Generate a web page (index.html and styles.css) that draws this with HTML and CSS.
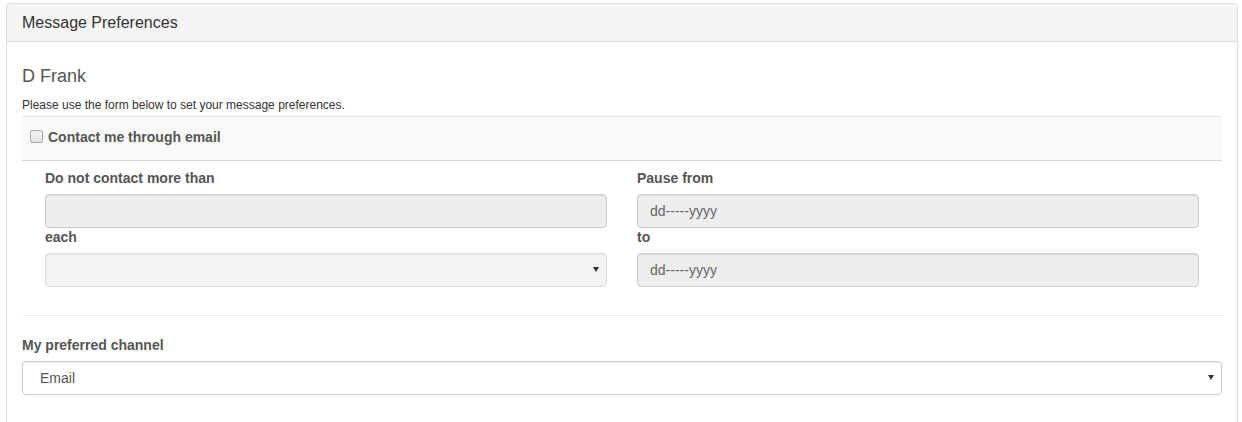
FILE: index.html
```html
<!DOCTYPE html>
<html>
<head>
<meta charset="utf-8">
<link rel="stylesheet" href="styles.css">
</head>
<body>
<div class="page">
  <div class="panel">
    <div class="panel-heading">Message Preferences</div>
    <div class="panel-body">
      <h4 class="name">D Frank</h4>
      <p class="intro">Please use the form below to set your message preferences.</p>
      <div class="contact-bar">
        <label class="check-label"><input type="checkbox" class="check"> Contact me through email</label>
      </div>
      <div class="grid">
        <div class="col">
          <label class="lbl">Do not contact more than</label>
          <input class="ctl" type="text" disabled>
          <label class="lbl">each</label>
          <div class="select-wrap">
            <select class="ctl sel" disabled><option></option></select>
          </div>
        </div>
        <div class="col">
          <label class="lbl">Pause from</label>
          <input class="ctl" type="text" placeholder="dd-----yyyy" disabled>
          <label class="lbl">to</label>
          <input class="ctl" type="text" placeholder="dd-----yyyy" disabled>
        </div>
      </div>
      <hr class="sep">
      <label class="lbl">My preferred channel</label>
      <div class="select-wrap">
        <select class="ctl sel white"><option>Email</option></select>
      </div>
    </div>
  </div>
</div>
</body>
</html>
```

FILE: styles.css
```css
* { box-sizing: border-box; }
html, body { margin: 0; padding: 0; background: #fff; }
body {
  font-family: "Liberation Sans", Arial, sans-serif;
  font-size: 14px;
  line-height: 1.42857;
  color: #333;
}
.page { padding: 3px 4px 0 6px; height: 422px; overflow: hidden; }
.panel {
  border: 1px solid #ddd;
  border-bottom: none;
  border-radius: 4px 4px 0 0;
  height: 419px;
  background: #fff;
}
.panel-heading {
  background: #f5f5f5;
  border-bottom: 1px solid #ddd;
  padding: 10px 15px;
  font-size: 16px;
  line-height: 17px;
  color: #333;
  border-radius: 3px 3px 0 0;
}
.panel-body { padding: 15px; }
.name {
  margin: 10px 0 10px;
  font-size: 18px;
  line-height: 1.1;
  font-weight: 400;
  color: #555;
}
.intro {
  margin: 0 0 2px;
  font-size: 12px;
  line-height: 17px;
  color: #333;
}
.contact-bar {
  background: #f9f9f9;
  border-top: 1px solid #e3e3e3;
  border-bottom: 1px solid #d5d5d5;
  height: 45px;
  padding: 11px 8px 0;
}
.check-label {
  font-weight: 700;
  color: #555;
  display: flex;
  align-items: center;
  gap: 5px;
}
.check {
  appearance: none;
  -webkit-appearance: none;
  width: 13px;
  height: 13px;
  margin: 0 0 3px 0;
  border: 1px solid #a9a9a9;
  border-radius: 2px;
  background: linear-gradient(#f4f4f4, #e2e2e2);
}
.grid {
  display: grid;
  grid-template-columns: 1fr 1fr;
  column-gap: 30px;
  padding: 8px 23px 9px;
}
.col { display: flex; flex-direction: column; }
.lbl {
  display: block;
  font-weight: 700;
  color: #555;
  margin-bottom: 5px;
}
.ctl {
  display: block;
  width: 100%;
  height: 34px;
  padding: 6px 12px;
  font-family: "Liberation Sans", Arial, sans-serif;
  font-size: 14px;
  color: #555;
  background: #eee;
  border: 1px solid #ccc;
  border-radius: 4px;
  box-shadow: inset 0 1px 1px rgba(0,0,0,.075);
  outline: none;
}
.ctl::placeholder { color: #666; opacity: 1; }
.sel { appearance: none; -webkit-appearance: none; padding-left: 12px; }
.sel.white { background: #fff; padding-left: 17px; color: #555; }
.select-wrap { position: relative; }
.select-wrap::after {
  content: "";
  position: absolute;
  right: 8px;
  top: 14px;
  border-left: 3px solid transparent;
  border-right: 3px solid transparent;
  border-top: 5px solid #333;
}
.sep {
  margin: 19px 0 20px;
  border: 0;
  border-top: 1px solid #eee;
  height: 0;
}
```
